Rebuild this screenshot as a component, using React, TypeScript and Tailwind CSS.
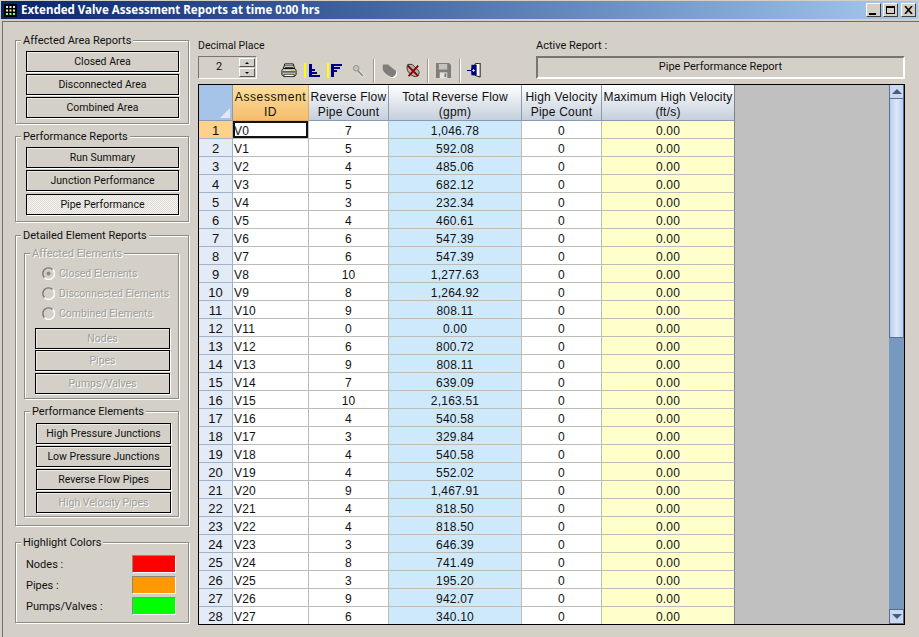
import React from "react";

const data: [string, string, string][] = [
  ["V0", "7", "1,046.78"], ["V1", "5", "592.08"], ["V2", "4", "485.06"], ["V3", "5", "682.12"],
  ["V4", "3", "232.34"], ["V5", "4", "460.61"], ["V6", "6", "547.39"], ["V7", "6", "547.39"],
  ["V8", "10", "1,277.63"], ["V9", "8", "1,264.92"], ["V10", "9", "808.11"], ["V11", "0", "0.00"],
  ["V12", "6", "800.72"], ["V13", "9", "808.11"], ["V14", "7", "639.09"], ["V15", "10", "2,163.51"],
  ["V16", "4", "540.58"], ["V17", "3", "329.84"], ["V18", "4", "540.58"], ["V19", "4", "552.02"],
  ["V20", "9", "1,467.91"], ["V21", "4", "818.50"], ["V22", "4", "818.50"], ["V23", "3", "646.39"],
  ["V24", "8", "741.49"], ["V25", "3", "195.20"], ["V26", "9", "942.07"], ["V27", "6", "340.10"],
];

function Btn({ children, disabled, pressed, className = "" }: { children: React.ReactNode; disabled?: boolean; pressed?: boolean; className?: string }) {
  return (
    <div
      className={`h-[21px] pt-px text-[10.5px] flex items-center justify-center whitespace-nowrap border border-black shadow-[1px_1px_0_#fff,inset_1px_1px_0_#ecebe6] ${
        pressed ? "bg-[repeating-conic-gradient(#f4f3f0_0_25%,#dedbd5_0_50%)] bg-[length:2px_2px]" : ""
      } ${disabled ? "text-[#a09e98] [text-shadow:1px_1px_0_#fff]" : "text-[#111]"} ${className}`}
    >
      {children}
    </div>
  );
}

function Group({ title, children, className = "", bodyClass = "", disabled }: { title: string; children: React.ReactNode; className?: string; bodyClass?: string; disabled?: boolean }) {
  return (
    <fieldset className={`min-w-0 border border-[#8d8b85] shadow-[1px_1px_0_#fff,inset_1px_1px_0_#fff] ${className}`}>
      <legend className={`ml-[5px] px-[2px] h-[14px] leading-[16px] whitespace-nowrap bg-[#d4d0c8] ${disabled ? "text-[#a09e98] [text-shadow:1px_1px_0_#fff]" : "text-[#111]"}`}>
        {title}
      </legend>
      <div className={bodyClass}>{children}</div>
    </fieldset>
  );
}

function Radio({ label, checked }: { label: string; checked?: boolean }) {
  return (
    <div className="h-[20px] flex items-center whitespace-nowrap text-[10.5px] text-[#a09e98] [text-shadow:1px_1px_0_#fff]">
      <svg width="13" height="13" viewBox="0 0 13 13" className="ml-[7px] mr-[4px] flex-none">
        <path d="M10.5 2.5A5.5 5.5 0 0 0 2.5 10.5" fill="none" stroke="#77756f" strokeWidth="1.4" />
        <path d="M2.5 10.8A5.5 5.5 0 0 0 10.8 2.5" fill="none" stroke="#fff" strokeWidth="1.4" />
        {checked && <circle cx="6.5" cy="6.5" r="2" fill="#8a8882" />}
      </svg>
      <span className="mt-[2px]">{label}</span>
    </div>
  );
}

function Sep() {
  return <div className="w-[2px] h-[24px] bg-[#9a9892] border-r border-white" />;
}

const Printer = () => (
  <svg width="16" height="15" viewBox="0 0 17 16" className="block">
    <path d="M4 1h9l1.500 5h-12z" fill="#fff" stroke="#000" />
    <path d="M4 3h9M4 4.800h9" stroke="#000" strokeWidth="0.8" />
    <path d="M1 8c0-1 1-2 2-2h11c1 0 2 1 2 2v4c0 1-1 2-2 2H3c-1 0-2-1-2-2z" fill="#d8d8d0" stroke="#000" />
    <path d="M2 9.500h13" stroke="#000" />
    <rect x="11" y="7.200" width="3" height="1.400" fill="#e8d020" />
    <path d="M3 12h11v2.500H3z" fill="#fff" stroke="#000" strokeWidth="0.8" />
  </svg>
);

const SortAsc = () => (
  <svg width="16" height="15" viewBox="0 0 16 15" className="block">
    <rect x="0" y="0" width="2" height="15" fill="#ffff00" />
    <rect x="5" y="1" width="3" height="13" fill="#000080" />
    <rect x="5" y="6" width="6" height="2" fill="#000080" />
    <rect x="5" y="9" width="8" height="2" fill="#000080" />
    <rect x="5" y="12" width="11" height="2" fill="#000080" />
  </svg>
);

const SortDesc = () => (
  <svg width="15" height="15" viewBox="0 0 15 15" className="block">
    <rect x="0" y="0" width="2" height="15" fill="#ffff00" />
    <rect x="4" y="1" width="3" height="13" fill="#000080" />
    <rect x="4" y="1" width="11" height="2" fill="#000080" />
    <rect x="4" y="4" width="9" height="2" fill="#000080" />
    <rect x="4" y="7" width="6" height="2" fill="#000080" />
  </svg>
);

const Search = () => (
  <svg width="13" height="14" viewBox="0 0 14 15" className="block">
    <path d="M7 8l5.500 5.500" stroke="#fff" strokeWidth="3" />
    <path d="M6.500 7.500l5.500 5.500" stroke="#8f8d88" strokeWidth="2" />
    <circle cx="4.500" cy="4.500" r="3" fill="#c4c2bc" stroke="#8f8d88" />
  </svg>
);

const Tag = () => (
  <svg width="15" height="15" viewBox="0 0 16 16" className="block">
    <path d="M1 1.500H6.500L14.500 8C16 10.500 14 15 10.500 15C8 15 3 11 1.500 8.500C0.500 6.500 0.500 3 1 1.500z" fill="#fff" transform="translate(1 1)" />
    <path d="M1 1.500H6.500L14.500 8C16 10.500 14 15 10.500 15C8 15 3 11 1.500 8.500C0.500 6.500 0.500 3 1 1.500z" fill="#807e7a" />
  </svg>
);

const TagX = () => (
  <svg width="14" height="15" viewBox="0 0 16 17" className="block">
    <path d="M2 1.500H7L14.500 9C16 11 14 15.500 10.500 15.500C8 15.500 3.500 12 2 9C1 7 1 3 2 1.500z" fill="#b5b3ad" stroke="#222" />
    <path d="M2 3L14 15M14 3L3 15" stroke="#8a0000" strokeWidth="2.200" />
  </svg>
);

const Save = () => (
  <svg width="15" height="15" viewBox="0 0 16 16" className="block">
    <path d="M0 0h14l2 2v14H0z" fill="#7f7d79" />
    <rect x="3" y="1" width="9" height="6" fill="#c4c2bc" />
    <rect x="4" y="10" width="8" height="6" fill="#e4e2dc" />
    <rect x="9" y="11" width="2" height="4" fill="#7f7d79" />
  </svg>
);

const ExitIcon = () => (
  <svg width="14" height="15" viewBox="0 0 16 17" className="block">
    <path d="M9 1L15 0V16L9 14z" fill="#fff" stroke="#000" />
    <rect x="5" y="2" width="6" height="12" fill="#000080" />
    <path d="M0 8h5V5l4 3.500-4 3.500V9H0z" fill="#000080" />
    <path d="M6 8.500h3M7.500 7v3" stroke="#fff" />
  </svg>
);

const WinBtn = ({ children }: { children: React.ReactNode }) => (
  <div className="w-[15px] h-[14px] bg-[#d4d0c8] border border-[#404040] border-t-white border-l-white flex items-center justify-center">
    {children}
  </div>
);

const headCell = "flex items-center justify-center text-center pt-[4px] border-r border-b border-[#8a9bb0] bg-linear-to-b from-white to-[#c5cfdc] leading-[15px] whitespace-nowrap";

const rowBorder = "border-r border-b border-[#bdbdb8] pt-[2px]";

export default function App() {
  return (
    <div className="w-[919px] h-[637px] flex flex-col bg-[#d4d0c8] overflow-hidden text-[#111] font-['Roboto',sans-serif] text-[11px]">
      <div className="h-[21px] flex-none pt-px">
        <div className="h-[18px] mx-[1px] flex items-center bg-linear-to-r from-[#0a246a] to-[#a6caf0] text-white">
          <svg width="13" height="13" viewBox="0 0 13 13" className="ml-[3px] mr-[4px] flex-none">
            <rect width="13" height="13" fill="#000" />
            <path d="M2 2h2v2H2zM5.500 2h2v2h-2zM9 2h2v2H9z" fill="#e0e0ff" />
            <path d="M2 5.500h2v2H2zM5.500 5.500h2v2h-2zM9 5.500h2v2H9z" fill="#fff080" />
            <path d="M2 9h2v2H2zM5.500 9h2v2h-2zM9 9h2v2H9z" fill="#80ff80" />
          </svg>
          <span className="font-bold font-['Noto_Sans',sans-serif] text-[11.5px] whitespace-nowrap">Extended Valve Assessment Reports at time 0:00 hrs</span>
          <div className="ml-auto mr-[2px] flex">
            <WinBtn>
              <div className="w-[7px] h-[2px] bg-black mt-[7px] mr-[2px]" />
            </WinBtn>
            <div className="ml-[2px]">
              <WinBtn>
                <div className="w-[9px] h-[8px] border border-black border-t-2" />
              </WinBtn>
            </div>
            <div className="ml-[3px]">
              <WinBtn>
                <svg width="9" height="8" viewBox="0 0 9 8"><path d="M1 0l7 8M8 0L1 8" stroke="#000" strokeWidth="1.6" /></svg>
              </WinBtn>
            </div>
          </div>
        </div>
      </div>
      <div className="flex-1 flex min-h-0 ml-[2px] border-l border-t border-[#6f6d68]">
        {/* sidebar */}
        <div className="w-[174px] ml-[12px] flex-none pt-[11px] flex flex-col">
          <Group title="Affected Area Reports" className="h-[91px]" bodyClass="pl-[10px] pr-[9px] pt-[4px]">
            <Btn>Closed Area</Btn>
            <Btn className="mt-[2px]">Disconnected Area</Btn>
            <Btn className="mt-[2px]">Combined Area</Btn>
          </Group>
          <Group title="Performance Reports" className="mt-[5px] h-[93px]" bodyClass="pl-[10px] pr-[9px] pt-[4px]">
            <Btn>Run Summary</Btn>
            <Btn className="mt-[2px]">Junction Performance</Btn>
            <Btn pressed className="mt-[3px]">Pipe Performance</Btn>
          </Group>
          <Group title="Detailed Element Reports" className="mt-[6px] h-[298px]" bodyClass="pl-[8px] pr-[9px] pt-[4px]">
            <Group title="Affected Elements" disabled className="h-[153px]" bodyClass="pl-[10px] pr-[8px] pt-[3px]">
              <Radio label="Closed Elements" checked />
              <Radio label="Disconnected Elements" />
              <Radio label="Combined Elements" />
              <Btn disabled className="mt-[5px]">Nodes</Btn>
              <Btn disabled className="mt-px">Pipes</Btn>
              <Btn disabled className="mt-[2px]">Pumps/Valves</Btn>
            </Group>
            <Group title="Performance Elements" className="mt-[5px] h-[113px]" bodyClass="pl-[11px] pr-[7px] pt-[5px]">
              <Btn>High Pressure Junctions</Btn>
              <Btn className="mt-[2px]">Low Pressure Junctions</Btn>
              <Btn className="mt-[2px]">Reverse Flow Pipes</Btn>
              <Btn disabled className="mt-[2px]">High Velocity Pipes</Btn>
            </Group>
          </Group>
          <Group title="Highlight Colors" className="mt-[9px] h-[88px]" bodyClass="pl-[10px] pr-[12px] pt-[4px]">
            {[
              ["Nodes :", "bg-[#ff0000]"],
              ["Pipes :", "bg-[#ff9900]"],
              ["Pumps/Valves :", "bg-[#00ff00]"],
            ].map(([l, c]) => (
              <div key={l} className="h-[21px] flex items-center justify-between">
                <span className="mt-[4px]">{l}</span>
                <div className={`w-[44px] h-[18px] border border-[#8a8882] border-r-white border-b-white ${c}`} />
              </div>
            ))}
          </Group>
        </div>
        {/* main */}
        <div className="ml-[9px] w-[707px] flex-none flex flex-col pt-[17px]">
          <div className="flex h-[46px] flex-none">
            <div className="w-[59px] flex-none">
              <div className="h-[17px] leading-[14px] whitespace-nowrap text-[10.5px]">Decimal Place</div>
              <div className="h-[23px] flex items-center border border-[#77756f] border-r-white border-b-white">
                <span className="w-[40px] text-center">2</span>
                <div className="w-[16px] flex flex-col gap-px">
                  <div className="h-[9px] border border-white border-r-[#555] border-b-[#555] flex items-center justify-center">
                    <div className="w-0 h-0 border-x-[2px] border-x-transparent border-b-[2px] border-b-black" />
                  </div>
                  <div className="h-[9px] border border-white border-r-[#555] border-b-[#555] flex items-center justify-center">
                    <div className="w-0 h-0 border-x-[2px] border-x-transparent border-t-[2px] border-t-black" />
                  </div>
                </div>
              </div>
            </div>
            <div className="w-[279px] flex-none flex items-center pt-[17px] pl-[24px]">
              <Printer />
              <div className="ml-[7px]"><SortAsc /></div>
              <div className="ml-[7px]"><SortDesc /></div>
              <div className="ml-[10px]"><Search /></div>
              <div className="ml-[8px]"><Sep /></div>
              <div className="ml-[7px]"><Tag /></div>
              <div className="ml-[9px]"><TagX /></div>
              <div className="ml-[7px]"><Sep /></div>
              <div className="ml-[7px]"><Save /></div>
              <div className="ml-[8px]"><Sep /></div>
              <div className="ml-[6px]"><ExitIcon /></div>
            </div>
            <div className="flex-1">
              <div className="h-[17px] leading-[14px]">Active Report :</div>
              <div className="h-[23px] flex items-center justify-center border-2 border-[#77756f] border-r-white border-b-white">
                Pipe Performance Report
              </div>
            </div>
          </div>
          <div className="h-[541px] flex-none mt-[-1px] flex border border-black overflow-hidden">
            <div className="w-[536px] flex-none overflow-hidden font-['Liberation_Sans',sans-serif] text-[12px] tracking-[0.2px] grid grid-cols-[34px_76px_80px_133px_80px_133px] auto-rows-[18px] grid-rows-[36px]">
              <div className="border-r border-b border-[#8a9bb0] bg-[#a6c4e8] flex items-end justify-end p-[2px]">
                <div className="w-0 h-0 border-l-[10px] border-l-transparent border-b-[10px] border-b-[#dfe9f5]" />
              </div>
              <div className="flex items-center justify-center text-center pt-[4px] border-r border-b border-[#e0a860] bg-linear-to-b from-[#fbdf9e] to-[#f5bd6c] leading-[15px] tracking-[0.6px]">Assessment<br />ID</div>
              <div className={headCell}>Reverse Flow<br />Pipe Count</div>
              <div className={headCell}>Total Reverse Flow<br />(gpm)</div>
              <div className={headCell}>High Velocity<br />Pipe Count</div>
              <div className={`${headCell} border-r-[#808080]`}>Maximum High Velocity<br />(ft/s)</div>
              {data.map((r, i) => (
                <React.Fragment key={r[0]}>
                  <div className={`flex items-center justify-center border-r border-b border-[#9fb2c9] pt-[3px] text-[13px] tracking-normal ${i === 0 ? "bg-[#ffd28c]" : "bg-[#e3ebf7]"}`}>{i + 1}</div>
                  <div className={`flex items-center pl-[1px] bg-white ${rowBorder} ${i === 0 ? "shadow-[inset_0_0_0_2px_#111]" : ""}`}>{r[0]}</div>
                  <div className={`flex items-center justify-center bg-white ${rowBorder}`}>{r[1]}</div>
                  <div className={`flex items-center justify-center bg-[#cde9fb] ${rowBorder}`}>{r[2]}</div>
                  <div className={`flex items-center justify-center bg-white ${rowBorder}`}>0</div>
                  <div className="flex items-center justify-center pt-[2px] bg-[#ffffcc] border-b border-b-[#bdbdb8] border-r border-r-[#808080]">0.00</div>
                </React.Fragment>
              ))}
            </div>
            <div className="flex-1 bg-[#c0c0c0]" />
            <div className="w-[15px] flex-none flex flex-col bg-[#7799c0]">
              <div className="h-[14px] flex-none bg-[#c9d9f2] border-x border-b border-[#5a6f96] flex items-center justify-center">
                <div className="w-0 h-0 border-x-[5px] border-x-transparent border-b-[5px] border-b-[#4a5a78]" />
              </div>
              <div className="h-[239px] flex-none bg-linear-to-r from-[#b8cdec] via-[#dce8fb] to-[#bcd0ee] border-x border-b border-[#5a6f96]" />
              <div className="flex-1" />
              <div className="h-[15px] flex-none bg-[#c9d9f2] border border-[#5a6a88] flex items-center justify-center">
                <div className="w-0 h-0 border-x-[5px] border-x-transparent border-t-[5px] border-t-[#4a5a78]" />
              </div>
            </div>
          </div>
        </div>
      </div>
    </div>
  );
}
